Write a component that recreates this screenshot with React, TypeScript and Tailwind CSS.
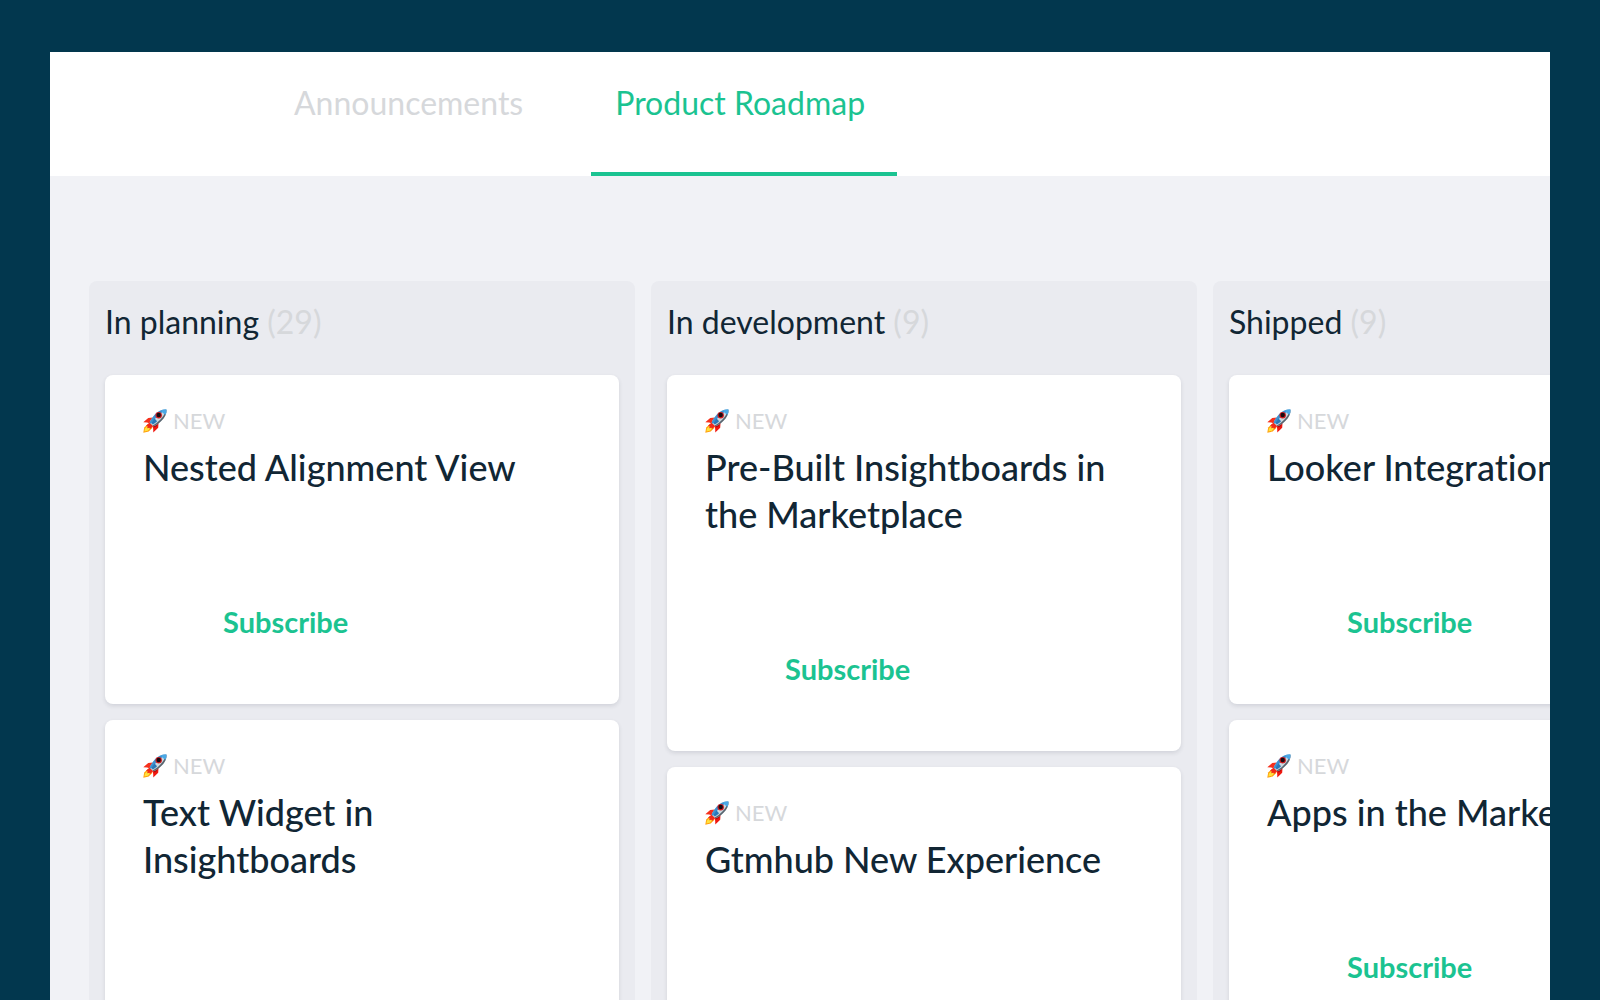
type Card = { title: string };
type Column = { name: string; count: number; cards: Card[] };

const columns: Column[] = [
  {
    name: "In planning",
    count: 29,
    cards: [{ title: "Nested Alignment View" }, { title: "Text Widget in Insightboards" }],
  },
  {
    name: "In development",
    count: 9,
    cards: [{ title: "Pre-Built Insightboards in the Marketplace" }, { title: "Gtmhub New Experience" }],
  },
  {
    name: "Shipped",
    count: 9,
    cards: [{ title: "Looker Integration" }, { title: "Apps in the Marketplace" }],
  },
];

function Rocket() {
  return (
    <svg viewBox="0 0 24 24" className="size-6 shrink-0" aria-hidden="true">
      <path d="M5 15 1.200 18.500.3 23.700l5.400-1.200 3.800-3.700z" fill="#ff9d0a" />
      <path d="M5 16.500 2 19.600 1.300 22.600l3.600-.9 2.900-2.900z" fill="#ffe23d" />
      <path d="M10 8.500 5.200 9 .3 13.200l3.800.2 3.100 1z" fill="#f5301c" />
      <path d="m15.500 13.800-.3 5-4.900 4.700-.1-3.800-.8-3z" fill="#f0180f" />
      <path d="m15.500 13.800-2 3.600-2 1.200-1.500-2z" fill="#b50d12" />
      <path d="m6.600 13.600-3.600 3.200 1.600.4-.4 2 2.200-.4.6 1.300 3.400-3.200z" fill="#f12a18" />
      <path d="M23.500.5c-4.800-.2-8.300 1.400-11.400 4.800-2.300 2.500-4.200 5.300-5.500 8.300l3.800 3.700c3.100-1.300 5.700-3 8.100-5.500 3.500-3.500 5.200-6.800 5-11.300z" fill="#cbd8e0" />
      <path d="M23.500.5c-4.800-.2-8.300 1.400-11.400 4.800-2.300 2.500-4.200 5.300-5.500 8.300l1.300 1.300C12 9.500 17 4 23.500.5z" fill="#3c91d0" />
      <path d="M23.500.5c.2 4.500-1.500 7.800-5 11.300-2.400 2.500-5 4.200-8.100 5.500l-.7-.7C15.500 13.200 20.500 8.500 23.500.5z" fill="#59656f" />
      <path d="M11.500 9.500c-1.300 1.300-2.300 2.900-3 4.600l1.300 1.300c1.700-.8 3.100-1.900 4.300-3.200z" fill="#2878b9" />
      <path d="M23.500.5c-2-.1-3.700.1-5.300.8.500 2 2 3.500 4.400 4.400.7-1.600 1-3.200.9-5.200z" fill="#4aa8e6" />
      <circle cx="15.700" cy="6.200" r="3.200" fill="#d31d20" />
      <circle cx="15.700" cy="6" r="2.200" fill="#170b12" />
    </svg>
  );
}

function RoadmapCard({ title }: Card) {
  return (
    <article className="rounded-lg bg-white px-[38px] pt-8 pb-[62px] shadow-[0_2px_4px_rgba(30,40,60,0.12)]">
      <div className="flex h-7 items-center gap-[6px] text-[22px] leading-7 text-[#d6d8db]">
        <Rocket />
        <span>NEW</span>
      </div>
      <h3 className="mt-[9px] text-[36px] leading-[47px] font-medium">{title}</h3>
      <button type="button" className="mt-[111px] ml-20 block h-10 text-[29px] leading-10 font-bold text-[#1bc391]">
        Subscribe
      </button>
    </article>
  );
}

export default function App() {
  return (
    <div className="h-screen overflow-hidden bg-[#02374e] px-[50px] pt-[52px] font-['Lato',sans-serif] text-[#112634] [font-variant-ligatures:none]">
      <div className="flex h-full flex-col overflow-hidden bg-[#f1f2f6]">
        <nav className="flex h-[124px] shrink-0 bg-white pl-[220px] text-[32px]">
          <a href="#announcements" className="border-b-4 border-transparent px-6 pt-[31px] leading-10 text-[#d6d8db]">
            Announcements
          </a>
          <a
            href="#roadmap"
            aria-current="page"
            className="ml-11 min-w-[306px] border-b-4 border-[#1bc391] px-6 pt-[31px] leading-10 text-[#1bc391]"
          >
            Product Roadmap
          </a>
        </nav>
        <main className="flex min-h-0 grow gap-4 overflow-hidden pt-[105px] pl-[39px]">
          {columns.map((column) => (
            <section key={column.name} className="w-[546px] shrink-0 rounded-t-lg bg-[#eaebf0] px-4">
              <h2 className="pt-[21px] pb-[33px] text-[32px] leading-10">
                {column.name} <span className="text-[#d6d8db]">({column.count})</span>
              </h2>
              <div className="flex flex-col gap-4">
                {column.cards.map((card) => (
                  <RoadmapCard key={card.title} title={card.title} />
                ))}
              </div>
            </section>
          ))}
        </main>
      </div>
    </div>
  );
}
